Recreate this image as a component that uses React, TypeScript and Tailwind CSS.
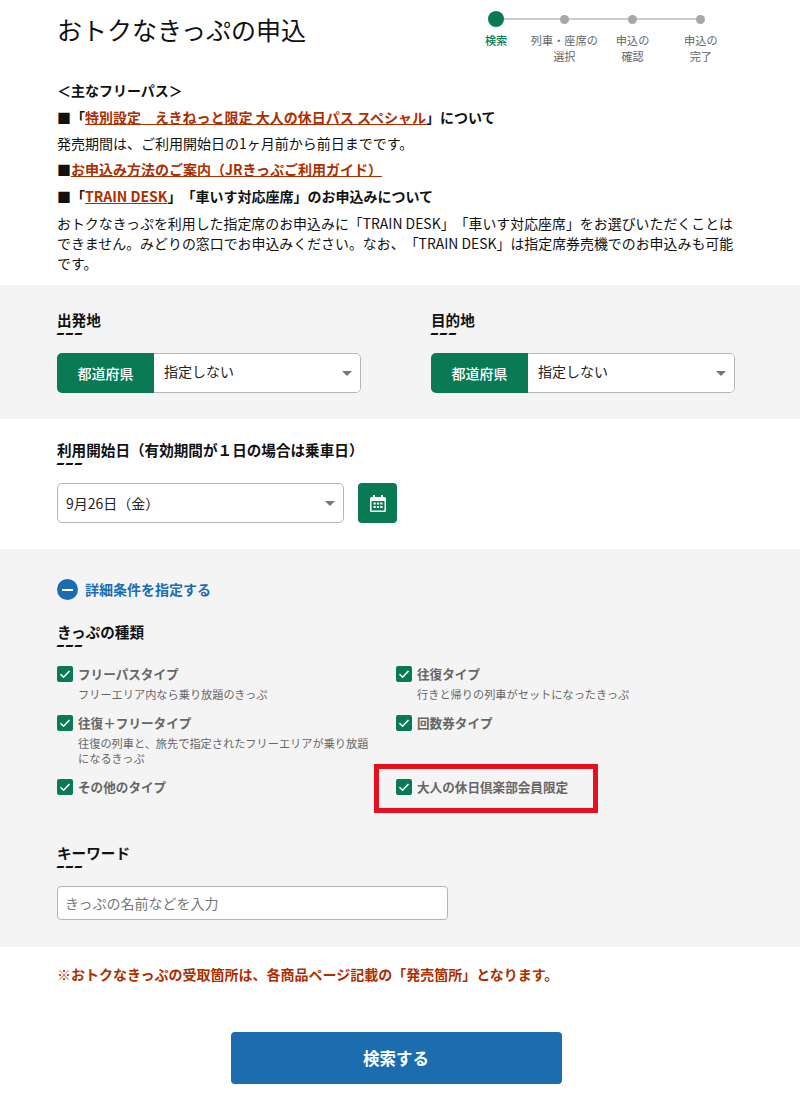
const font = { fontFamily: '"Noto Sans CJK JP", "Noto Sans", sans-serif' };

function Heading({ children }: { children: React.ReactNode }) {
  return (
    <div>
      <div className="text-[14.6px] leading-[21px] font-bold text-[#111]">{children}</div>
      <div className="mt-[3px] flex gap-[2px]">
        <span className="h-[2px] w-[7px] -skew-x-30 bg-[#111]" />
        <span className="h-[2px] w-[7px] -skew-x-30 bg-[#111]" />
        <span className="h-[2px] w-[7px] -skew-x-30 bg-[#111]" />
      </div>
    </div>
  );
}

function Caret() {
  return <span className="h-0 w-0 border-x-[5px] border-t-[5px] border-x-transparent border-t-[#777]" />;
}

function PrefSelect() {
  return (
    <div className="flex h-[40px] w-[304px] overflow-hidden rounded-[5px]">
      <div className="flex w-[97px] items-center justify-center bg-[#0a7a55] text-[14px] font-medium text-white">都道府県</div>
      <div className="flex flex-1 items-center justify-between rounded-r-[5px] border border-l-0 border-[#b5b5b5] bg-white pr-[8px] pl-[10px] text-[14px] text-[#222]">
        <span className="-mt-[3px]">指定しない</span>
        <Caret />
      </div>
    </div>
  );
}

function Check({ title, sub }: { title: string; sub?: React.ReactNode }) {
  return (
    <div className="flex gap-[5px]">
      <span className="mt-[1px] flex h-[16px] w-[16px] shrink-0 items-center justify-center rounded-[2px] bg-[#0a7a55]">
        <svg width="12" height="12" viewBox="0 0 12 12" fill="none" stroke="white" strokeWidth="1.6">
          <path d="M1.5 6.2 4.6 9.2 10.5 3" />
        </svg>
      </span>
      <div>
        <div className="text-[12.6px] leading-[18px] font-bold text-[#666]">{title}</div>
        {sub && <div className="mt-[4px] text-[11.2px] leading-[15px] text-[#666]">{sub}</div>}
      </div>
    </div>
  );
}

const steps = [
  { label: ["検索"], active: true },
  { label: ["列車・座席の", "選択"] },
  { label: ["申込の", "確認"] },
  { label: ["申込の", "完了"] },
];

export default function App() {
  return (
    <div className="h-[1100px] w-[800px] overflow-hidden bg-white text-[#111] [text-spacing-trim:space-all]" style={font}>
      {/* header + stepper */}
      <div className="flex justify-between pr-[65px] pl-[57px]">
        <h1 className="mt-[13px] text-[25px] leading-[32px] font-normal">おトクなきっぷの申込</h1>
        <div className="relative mt-[11px] grid w-[273px] grid-cols-4">
          <div className="absolute top-[7px] right-[34px] left-[34px] h-[2px] bg-[#ccc]" />
          {steps.map((s, i) => (
            <div key={i} className="relative flex flex-col items-center">
              <div className="flex h-[16px] items-center">
                <span className={s.active ? "h-[16px] w-[16px] rounded-full bg-[#0a7a55]" : "h-[9px] w-[9px] rounded-full bg-[#a8a8a8]"} />
              </div>
              <div className={`mt-[5px] text-center text-[11.2px] leading-[16px] ${s.active ? "font-medium text-[#0a7a55]" : "text-[#666]"}`}>
                {s.label.map((l) => (
                  <div key={l}>{l}</div>
                ))}
              </div>
            </div>
          ))}
        </div>
      </div>

      {/* notice */}
      <div className="mt-[16px] px-[57px] text-[14px] leading-[20px]">
        <p className="font-bold">＜主なフリーパス＞</p>
        <p className="mt-[7px] font-bold">
          ■「<a className="text-[#ad2f00] underline">特別設定　えきねっと限定 大人の休日パス スペシャル</a>」について
        </p>
        <p className="mt-[6px]">発売期間は、ご利用開始日の1ヶ月前から前日までです。</p>
        <p className="mt-[6px] font-bold">
          ■<a className="text-[#ad2f00] underline">お申込み方法のご案内（JRきっぷご利用ガイド）</a>
        </p>
        <p className="mt-[7px] font-bold">
          ■「<a className="text-[#ad2f00] underline">TRAIN DESK</a>」「車いす対応座席」のお申込みについて
        </p>
        <p className="mt-[7px] w-[686px] text-[13.93px]">
          おトクなきっぷを利用した指定席のお申込みに「TRAIN DESK」「車いす対応座席」をお選びいただくことはできません。みどりの窓口でお申込みください。なお、「TRAIN DESK」は指定席券売機でのお申込みも可能です。
        </p>
      </div>

      {/* origin / destination */}
      <div className="mt-[12px] flex h-[134px] gap-[70px] bg-[#f4f4f4] px-[57px] pt-[24px]">
        <div>
          <Heading>出発地</Heading>
          <div className="mt-[18px]">
            <PrefSelect />
          </div>
        </div>
        <div>
          <Heading>目的地</Heading>
          <div className="mt-[18px]">
            <PrefSelect />
          </div>
        </div>
      </div>

      {/* date */}
      <div className="h-[130px] px-[57px] pt-[20px]">
        <Heading>利用開始日（有効期間が１日の場合は乗車日）</Heading>
        <div className="mt-[18px] flex gap-[14px]">
          <div className="flex h-[40px] w-[287px] items-center justify-between rounded-[5px] border border-[#b5b5b5] bg-white pr-[8px] pl-[8px] text-[14px] text-[#222]">
            <span>9月26日（金）</span>
            <Caret />
          </div>
          <div className="flex h-[40px] w-[39px] items-center justify-center rounded-[4px] bg-[#0a7a55]">
            <svg width="16" height="17" viewBox="0 0 16 17" fill="white">
              <path d="M3 0h2v2h6V0h2v2h1.5A1.5 1.5 0 0 1 16 3.500v12a1.500 1.500 0 0 1-1.500 1.500h-13A1.500 1.500 0 0 1 0 15.500v-12A1.500 1.500 0 0 1 1.500 2H3z" />
              <g fill="#0a7a55">
                <rect x="1.500" y="6" width="13" height="9.500" />
              </g>
              <g>
                <rect x="3.500" y="7.500" width="2.200" height="2" />
                <rect x="6.900" y="7.500" width="2.200" height="2" />
                <rect x="10.300" y="7.500" width="2.200" height="2" />
                <rect x="3.500" y="11" width="2.200" height="2" />
                <rect x="6.900" y="11" width="2.200" height="2" />
                <rect x="10.300" y="11" width="2.200" height="2" />
              </g>
            </svg>
          </div>
        </div>
      </div>

      {/* detail conditions */}
      <div className="h-[398px] bg-[#f4f4f4] px-[57px] pt-[30px]">
        <div className="flex items-center gap-[7px]">
          <span className="flex h-[21px] w-[21px] items-center justify-center rounded-full bg-[#1b6db0]">
            <span className="h-[2px] w-[11px] bg-white" />
          </span>
          <span className="text-[14px] font-bold text-[#1b6db0]">詳細条件を指定する</span>
        </div>

        <div className="mt-[21px]">
          <Heading>きっぷの種類</Heading>
        </div>

        <div className="mt-[18px] grid grid-cols-[339px_1fr]">
          <div className="h-[49px]">
            <Check title="フリーパスタイプ" sub="フリーエリア内なら乗り放題のきっぷ" />
          </div>
          <div>
            <Check title="往復タイプ" sub="行きと帰りの列車がセットになったきっぷ" />
          </div>
          <div className="h-[64px] w-[312px]">
            <Check title="往復＋フリータイプ" sub="往復の列車と、旅先で指定されたフリーエリアが乗り放題になるきっぷ" />
          </div>
          <div>
            <Check title="回数券タイプ" />
          </div>
          <div>
            <Check title="その他のタイプ" />
          </div>
          <div className="relative">
            <Check title="大人の休日倶楽部会員限定" />
            <div className="absolute -top-[14px] -left-[22px] h-[49px] w-[224px] border-[5px] border-[#e60f1e]" />
          </div>
        </div>

        <div className="mt-[46px]">
          <Heading>キーワード</Heading>
        </div>
        <div className="mt-[18px] flex h-[34px] w-[391px] items-center rounded-[4px] border border-[#b5b5b5] bg-white px-[7px] text-[14px] text-[#777]">
          きっぷの名前などを入力
        </div>
      </div>

      {/* footer note + search */}
      <p className="mt-[16px] px-[57px] text-[14px] leading-[22px] font-bold text-[#ad2f00]">
        ※おトクなきっぷの受取箇所は、各商品ページ記載の「発売箇所」となります。
      </p>
      <div className="mt-[47px] flex justify-center pr-[8px]">
        <button className="h-[52px] w-[331px] rounded-[4px] bg-[#1b6db0] text-[16.5px] font-bold text-white">検索する</button>
      </div>
    </div>
  );
}
